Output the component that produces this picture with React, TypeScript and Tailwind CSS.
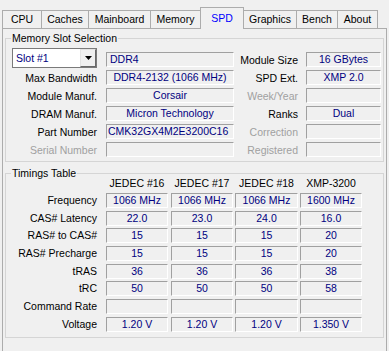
import React from "react";

const TABS = [
  { name: "CPU", w: 40 },
  { name: "Caches", w: 48 },
  { name: "Mainboard", w: 63 },
  { name: "Memory", w: 51 },
  { name: "SPD", w: 44, active: true },
  { name: "Graphics", w: 54 },
  { name: "Bench", w: 42 },
  { name: "About", w: 41 },
];

const TIMINGS = [
  { label: "Frequency", vals: ["1066 MHz", "1066 MHz", "1066 MHz", "1600 MHz"] },
  { label: "CAS# Latency", vals: ["22.0", "23.0", "24.0", "16.0"] },
  { label: "RAS# to CAS#", vals: ["15", "15", "15", "20"] },
  { label: "RAS# Precharge", vals: ["15", "15", "15", "20"] },
  { label: "tRAS", vals: ["36", "36", "36", "38"] },
  { label: "tRC", vals: ["50", "50", "50", "58"] },
  { label: "Command Rate", vals: ["", "", "", ""] },
  { label: "Voltage", vals: ["1.20 V", "1.20 V", "1.20 V", "1.350 V"] },
];

const COLS = [
  { w: "w-[62px]", ml: "" },
  { w: "w-[62px]", ml: "ml-[3px]" },
  { w: "w-[63px]", ml: "ml-[2px]" },
  { w: "w-[62px]", ml: "ml-[2px]" },
];

function Field({ children, className = "" }: { children?: React.ReactNode; className?: string }) {
  return (
    <div
      className={`h-[15px] flex items-center border border-t-[#a0a0a0] border-l-[#a0a0a0] border-r-white border-b-white text-[#000080] whitespace-nowrap overflow-hidden ${className}`}
    >
      {children}
    </div>
  );
}

function SlotRow({
  left,
  value,
  valueAlign = "justify-center",
  rightLabel,
  rightValue,
  leftDim,
  rightDim,
}: {
  left: React.ReactNode;
  value: string;
  valueAlign?: string;
  rightLabel: string;
  rightValue: string;
  leftDim?: boolean;
  rightDim?: boolean;
}) {
  return (
    <div className="flex items-end">
      <div className={`w-[91px] flex justify-end ${leftDim ? "text-[#a0a0a0]" : ""}`}>{left}</div>
      <Field className={`ml-[9px] w-[128px] ${valueAlign}`}>{value}</Field>
      <div className={`w-[64px] text-right ${rightDim ? "text-[#a0a0a0]" : ""}`}>{rightLabel}</div>
      <Field className="ml-[8px] w-[75px] justify-center">{rightValue}</Field>
    </div>
  );
}

export default function App() {
  return (
    <div className="w-[389px] h-[351px] overflow-hidden bg-[#f0f0f0] text-[10.5px] leading-[13px] text-black [font-family:'Liberation_Sans',Tahoma,Arial,sans-serif]">
      {/* tab strip */}
      <div className="flex items-end h-[28px] pl-[2px]">
        {TABS.map((t, i) =>
          t.active ? (
            <div
              key={t.name}
              style={{ width: t.w }}
              className="h-[22px] -mb-px -ml-px relative z-10 flex items-center justify-center border border-b-0 border-[#acacac] bg-[#f0f0f0] text-[#0000ff]"
            >
              {t.name}
            </div>
          ) : (
            <div
              key={t.name}
              style={{ width: t.w }}
              className={`h-[18px] flex items-center justify-center border border-b-0 border-[#acacac] bg-[#f0f0f0] ${i > 0 ? "-ml-px" : ""}`}
            >
              {t.name}
            </div>
          )
        )}
      </div>

      {/* tab page */}
      <div className="mx-[2px] h-[330px] border border-[#acacac] bg-[#f0f0f0] pl-px pr-[2px]">
        <fieldset className="mt-[3px] ml-px border border-[#d5d5d5] pb-[4px]">
          <legend className="ml-[5px] px-px">Memory Slot Selection</legend>
          <div className="pt-[3px] flex flex-col gap-[3px]">
            <SlotRow
              left={
                <div className="w-[85px] h-[20px] -mb-px flex items-center border border-[#7a7a7a] bg-white">
                  <span className="flex-1 pl-[3px] text-[#000080]">Slot #1</span>
                  <div className="w-[16px] h-[18px] flex items-center justify-center border border-t-[#e3e3e3] border-l-[#e3e3e3] border-r-[#696969] border-b-[#696969] bg-[#f0f0f0]">
                    <svg width="7" height="4" viewBox="0 0 7 4">
                      <path d="M0 0h7L3.5 4z" fill="#000" />
                    </svg>
                  </div>
                </div>
              }
              value="DDR4"
              valueAlign="justify-start pl-[3px]"
              rightLabel="Module Size"
              rightValue="16 GBytes"
            />
            <SlotRow left="Max Bandwidth" value="DDR4-2132 (1066 MHz)" rightLabel="SPD Ext." rightValue="XMP 2.0" />
            <SlotRow left="Module Manuf." value="Corsair" rightLabel="Week/Year" rightValue="" rightDim />
            <SlotRow left="DRAM Manuf." value="Micron Technology" rightLabel="Ranks" rightValue="Dual" />
            <SlotRow
              left="Part Number"
              value="CMK32GX4M2E3200C16"
              valueAlign="justify-start pl-px"
              rightLabel="Correction"
              rightValue=""
              rightDim
            />
            <SlotRow left="Serial Number" value="" rightLabel="Registered" rightValue="" leftDim rightDim />
          </div>
        </fieldset>

        <fieldset className="mt-[5px] ml-px border border-[#d5d5d5] h-[171px]">
          <legend className="ml-[5px] px-px">Timings Table</legend>
          <div className="-mt-[3px] flex">
            <div className="w-[100px]" />
            {["JEDEC #16", "JEDEC #17", "JEDEC #18", "XMP-3200"].map((h, i) => (
              <div key={h} className={`${COLS[i].w} ${COLS[i].ml} text-center whitespace-nowrap`}>
                {h}
              </div>
            ))}
          </div>
          <div className="mt-[3px] flex flex-col gap-[2.7px]">
            {TIMINGS.map((r) => (
              <div key={r.label} className="flex items-center">
                <div className="w-[91px] text-right whitespace-nowrap">{r.label}</div>
                <div className="w-[9px]" />
                {r.vals.map((v, i) => (
                  <Field key={i} className={`${COLS[i].w} ${COLS[i].ml} justify-center`}>
                    {v}
                  </Field>
                ))}
              </div>
            ))}
          </div>
        </fieldset>
      </div>
    </div>
  );
}
